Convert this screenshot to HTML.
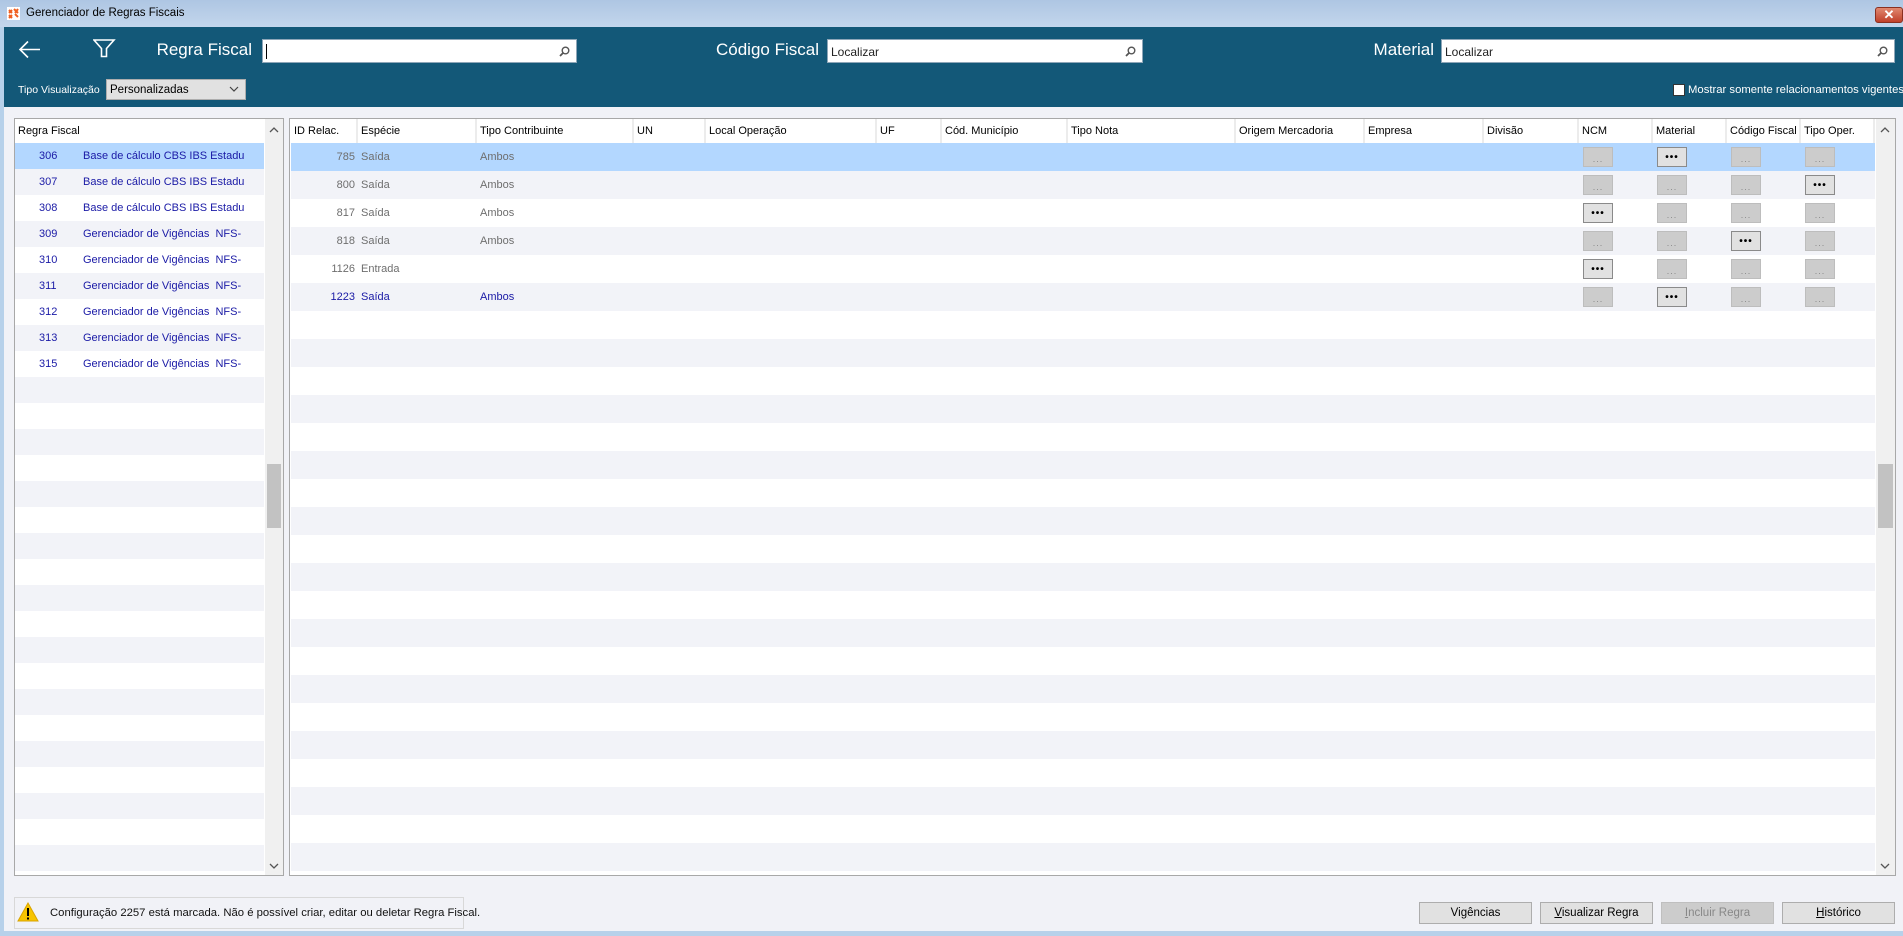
<!DOCTYPE html>
<html><head><meta charset="utf-8">
<style>
*{box-sizing:border-box;margin:0;padding:0}
body{width:1903px;height:936px;overflow:hidden;background:#f1f2f7;font-family:"Liberation Sans",sans-serif;font-size:11px;position:relative;white-space:nowrap}
.abs{position:absolute}
#title{left:0;top:0;width:1903px;height:27px;background:linear-gradient(#aec6e3,#c3d6ec);}
#title span{position:absolute;left:26px;top:7px;font-size:11.5px;color:#000}
#lb{left:0;top:27px;width:4px;height:909px;background:#b7d1ea}
#bb{left:0;top:931px;width:1903px;height:5px;background:#b7d1ea}
#hdr{left:4px;top:27px;width:1899px;height:80px;background:#135878}
.lbl{color:#fff;font-size:17px;top:40px;text-align:right}
.inp{background:#fff;border:1px solid #8ea6b8;height:24px;top:39px}
.inp span{position:absolute;left:3px;top:5px;font-size:12px;color:#222}
.mag{position:absolute;right:6px;top:6px}
.panel{background:#fff;border:1px solid #a8a8a8}
.hcell{position:absolute;top:0;height:24px;line-height:24px;padding-left:3px;border-right:2px solid #ececec;color:#000;background:#fff;white-space:nowrap;overflow:hidden}
.row{position:absolute;left:0}
.sb{position:absolute;background:#f0f0f0}
.btn{position:absolute;width:30px;height:20px;border:1px solid #bdbdbd;background:#cccccc;color:#888;font-size:9px;text-align:center;line-height:22px;letter-spacing:1px}
.btn.on{background:#e1e1e1;border-color:#8a8a8a;color:#000;font-weight:bold;font-size:10px;line-height:20px}
.fb{position:absolute;top:902px;height:22px;width:113px;border:1px solid #adadad;background:#e1e1e1;text-align:center;line-height:20px;font-size:11.5px}
</style></head><body>
<div id="title" class="abs">
<svg class="abs" style="left:7px;top:7px" width="13" height="13"><rect width="13" height="13" fill="#fff"/><path d="M2 3l3 3M5 3l-3 3M7 2l4 4M8 7l3 3M2 8l3 3M5 8l-3 3M11 2l-3 4" stroke="#f06020" stroke-width="2"/></svg>
<span>Gerenciador de Regras Fiscais</span>
<div class="abs" style="left:1875px;top:7px;width:28px;height:16px;background:linear-gradient(#e08870,#c0402a);border:1px solid #8a3020;border-radius:3px;color:#fff;text-align:center;font-weight:bold;font-size:13px;line-height:14px">✕</div>
</div>
<div id="lb" class="abs"></div>
<div id="hdr" class="abs"></div>
<svg class="abs" style="left:18px;top:40px" width="24" height="20"><path d="M2 9.5H22M10 1.5L2 9.5L10 17.5" fill="none" stroke="#fff" stroke-width="1.6"/></svg>
<svg class="abs" style="left:93px;top:39px" width="23" height="19"><path d="M1 1H21L13.5 9.5V17.5H8.5V9.5Z" fill="none" stroke="#fff" stroke-width="1.6"/></svg>
<div class="abs lbl" style="left:152px;width:100px">Regra Fiscal</div>
<div class="abs inp" style="left:262px;width:315px"><div style="position:absolute;left:3px;top:4px;width:1px;height:15px;background:#000"></div><svg class="mag" width="11" height="11"><circle cx="6.5" cy="4.5" r="3.3" fill="none" stroke="#555" stroke-width="1.4"/><path d="M4 7L1 10" stroke="#555" stroke-width="1.8"/></svg></div>
<div class="abs lbl" style="left:700px;width:119px">Código Fiscal</div>
<div class="abs inp" style="left:827px;width:316px"><span>Localizar</span><svg class="mag" width="11" height="11"><circle cx="6.5" cy="4.5" r="3.3" fill="none" stroke="#555" stroke-width="1.4"/><path d="M4 7L1 10" stroke="#555" stroke-width="1.8"/></svg></div>
<div class="abs lbl" style="left:1350px;width:84px">Material</div>
<div class="abs inp" style="left:1441px;width:454px"><span>Localizar</span><svg class="mag" width="11" height="11"><circle cx="6.5" cy="4.5" r="3.3" fill="none" stroke="#555" stroke-width="1.4"/><path d="M4 7L1 10" stroke="#555" stroke-width="1.8"/></svg></div>
<div class="abs" style="left:18px;top:84px;color:#fff;font-size:10.5px">Tipo Visualização</div>
<div class="abs" style="left:106px;top:79px;width:140px;height:21px;background:#e1e1e1;border:1px solid #adadad;font-size:11.5px;padding:4px 0 0 3px">Personalizadas<svg class="abs" style="right:6px;top:6px" width="10" height="7"><path d="M1 1L5 5L9 1" fill="none" stroke="#444" stroke-width="1.2"/></svg></div>
<div class="abs" style="left:1673px;top:84px;width:12px;height:12px;background:#fff;border:1px solid #333"></div>
<div class="abs" style="left:1688px;top:84px;color:#fff;font-size:11.3px">Mostrar somente relacionamentos vigentes</div>

<div class="abs panel" id="lp" style="left:14px;top:118px;width:270px;height:758px;overflow:hidden">
<div class="hcell" style="left:0;width:251px;border:0">Regra Fiscal</div>
<div class="sb" style="left:250px;top:0;width:18px;height:756px"></div>
<div class="abs" style="left:252px;top:345px;width:14px;height:64px;background:#c2c2c2"></div>
<svg class="abs" style="left:254px;top:7px" width="10" height="7"><path d="M1 6L5 2L9 6" fill="none" stroke="#555" stroke-width="1.3"/></svg>
<svg class="abs" style="left:254px;top:744px" width="10" height="7"><path d="M1 1L5 5L9 1" fill="none" stroke="#555" stroke-width="1.3"/></svg>
</div>
<div class="abs panel" id="rp" style="left:289px;top:118px;width:1607px;height:758px;overflow:hidden">
<div class="sb" style="left:1586px;top:0;width:19px;height:756px"></div>
<div class="abs" style="left:1588px;top:345px;width:15px;height:64px;background:#c2c2c2"></div>
<svg class="abs" style="left:1590px;top:7px" width="10" height="7"><path d="M1 6L5 2L9 6" fill="none" stroke="#555" stroke-width="1.3"/></svg>
<svg class="abs" style="left:1590px;top:744px" width="10" height="7"><path d="M1 1L5 5L9 1" fill="none" stroke="#555" stroke-width="1.3"/></svg>
</div>

<div class="abs" style="left:14px;top:897px;width:450px;height:32px;border:1px solid #d8d8d8;background:#f1f2f7">
<svg class="abs" style="left:2px;top:4px" width="22" height="20"><path d="M11 1L21 19H1Z" fill="#f7c400" stroke="#d9a400"/><rect x="10" y="6" width="2" height="8" fill="#000"/><rect x="10" y="15.5" width="2" height="2" fill="#000"/></svg>
<div class="abs" style="left:35px;top:9px;font-size:11.3px;color:#111">Configuração 2257 está marcada. Não é possível criar, editar ou deletar Regra Fiscal.</div>
</div>
<div class="fb" style="left:1419px">Vi<u>g</u>ências</div>
<div class="fb" style="left:1540px"><u>V</u>isualizar Regra</div>
<div class="fb" style="left:1661px;background:#cccccc;border-color:#bfbfbf;color:#888"><u>I</u>ncluir Regra</div>
<div class="fb" style="left:1782px"><u>H</u>istórico</div>
<div id="bb" class="abs"></div>

<script>
var lp=document.getElementById('lp');
var L=[["306","Base de cálculo CBS IBS Estadu"],["307","Base de cálculo CBS IBS Estadu"],["308","Base de cálculo CBS IBS Estadu"],["309","Gerenciador de Vigências  NFS-"],["310","Gerenciador de Vigências  NFS-"],["311","Gerenciador de Vigências  NFS-"],["312","Gerenciador de Vigências  NFS-"],["313","Gerenciador de Vigências  NFS-"],["315","Gerenciador de Vigências  NFS-"]];
var h='';
for(var i=0;i<30;i++){var y=24+i*26;var bg=i==0?'#b3d7ff':(i%2?'#f2f3f8':'#fff');
h+='<div class="row" style="top:'+y+'px;width:249px;height:26px;background:'+bg+'">';
if(L[i])h+='<span class="abs" style="left:24px;top:7px;color:#1a1aa6">'+L[i][0]+'</span><span class="abs" style="left:68px;top:7px;color:#1a1aa6;white-space:pre">'+L[i][1]+'</span>';
h+='</div>';}
lp.insertAdjacentHTML('afterbegin',h);
var rp=document.getElementById('rp');
var cols=[["ID Relac.",67],["Espécie",119],["Tipo Contribuinte",157],["UN",72],["Local Operação",171],["UF",65],["Cód. Município",126],["Tipo Nota",168],["Origem Mercadoria",129],["Empresa",119],["Divisão",95],["NCM",74],["Material",74],["Código Fiscal",74],["Tipo Oper.",74]];
h='';var x=1,xs=[];
for(var c=0;c<cols.length;c++){xs.push(x);h+='<div class="hcell" style="left:'+x+'px;width:'+cols[c][1]+'px">'+cols[c][0]+'</div>';x+=cols[c][1];}
var D=[["785","Saída","Ambos",[0,1,0,0]],["800","Saída","Ambos",[0,0,0,1]],["817","Saída","Ambos",[1,0,0,0]],["818","Saída","Ambos",[0,0,1,0]],["1126","Entrada","",[1,0,0,0]],["1223","Saída","Ambos",[0,1,0,0]]];
for(var i=0;i<28;i++){var y=24+i*28;var bg=i==0?'#b3d7ff':(i%2?'#f2f3f8':'#fff');
h+='<div class="row" style="left:1px;top:'+y+'px;width:1584px;height:28px;background:'+bg+'">';
var d=D[i];if(d){var col=i==5?'#1a1aa6':'#6e6e6e';
h+='<span class="abs" style="right:1520px;top:8px;color:'+col+'">'+d[0]+'</span><span class="abs" style="left:70px;top:8px;color:'+col+'">'+d[1]+'</span><span class="abs" style="left:189px;top:8px;color:'+col+'">'+d[2]+'</span>';
for(var b=0;b<4;b++){h+='<div class="btn'+(d[3][b]?' on':'')+'" style="left:'+(xs[11+b]+3)+'px;top:4px">'+(d[3][b]?'•••':'...')+'</div>';}}
h+='</div>';}
rp.insertAdjacentHTML('afterbegin',h);
</script>
</body></html>
